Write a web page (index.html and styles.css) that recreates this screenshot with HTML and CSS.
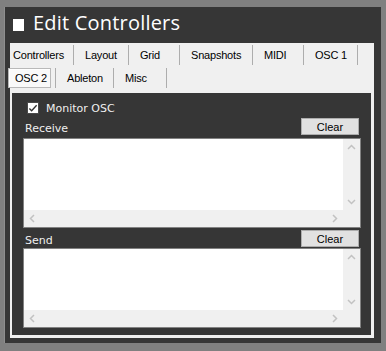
FILE: index.html
```html
<!DOCTYPE html>
<html lang="en">

<head>
  <meta charset="utf-8" />
  <title>Edit Controllers</title>
  <link rel="stylesheet" href="styles.css">
</head>

<body>
  <div class="window">
    <div class="titlebar">
      <span class="title-icon"></span>
      <h1>Edit Controllers</h1>
    </div>

    <div class="tabcontrol">
      <div class="tabstrip">
        <div class="tabrow row-top">
          <div class="tab">Controllers</div>
          <div class="tab">Layout</div>
          <div class="tab">Grid</div>
          <div class="tab">Snapshots</div>
          <div class="tab">MIDI</div>
          <div class="tab">OSC 1</div>
        </div>
        <div class="tabrow row-bottom">
          <div class="tab selected"><span>OSC 2</span></div>
          <div class="tab">Ableton</div>
          <div class="tab">Misc</div>
        </div>
      </div>

      <div class="tabpage">
        <label class="check">
          <span class="checkbox">
            <svg width="11" height="11" viewBox="0 0 11 11">
              <polyline points="1.5,5.5 4,8 9.5,2" fill="none" stroke="#333" stroke-width="1.5" />
            </svg>
          </span>
          Monitor OSC
        </label>

        <div class="log-head head-receive">
          <span>Receive</span>
          <button type="button">Clear</button>
        </div>
        <div class="logbox box-receive">
          <div class="log-text"></div>
          <div class="vscroll">
            <svg width="17" height="17" viewBox="0 0 17 17"><polyline points="5,10 8.5,6.5 12,10" /></svg>
            <svg width="17" height="17" viewBox="0 0 17 17"><polyline points="5,7 8.5,10.5 12,7" /></svg>
          </div>
          <div class="hscroll">
            <svg width="17" height="17" viewBox="0 0 17 17"><polyline points="10,5 6.5,8.5 10,12" /></svg>
            <svg width="17" height="17" viewBox="0 0 17 17"><polyline points="7,5 10.5,8.5 7,12" /></svg>
          </div>
          <div class="corner"></div>
        </div>

        <div class="log-head head-send">
          <span>Send</span>
          <button type="button">Clear</button>
        </div>
        <div class="logbox box-send">
          <div class="log-text"></div>
          <div class="vscroll">
            <svg width="17" height="17" viewBox="0 0 17 17"><polyline points="5,10 8.5,6.5 12,10" /></svg>
            <svg width="17" height="17" viewBox="0 0 17 17"><polyline points="5,7 8.5,10.5 12,7" /></svg>
          </div>
          <div class="hscroll">
            <svg width="17" height="17" viewBox="0 0 17 17"><polyline points="10,5 6.5,8.5 10,12" /></svg>
            <svg width="17" height="17" viewBox="0 0 17 17"><polyline points="7,5 10.5,8.5 7,12" /></svg>
          </div>
          <div class="corner"></div>
        </div>
      </div>
    </div>
  </div>
</body>

</html>
```

FILE: styles.css
```css
* {
  box-sizing: border-box;
}

body {
  margin: 0;
  background-color: #808080;
  font-family: "Liberation Sans", Arial, sans-serif;
  font-size: 11px;
  overflow: hidden;
}

.window {
  margin: 7px 0 0 4px;
  width: 377px;
  height: 336px;
  background-color: #363636;
  border-left: 1px solid #8e8e8e;
}

/* title */

.titlebar {
  display: flex;
  align-items: flex-start;
  height: 36px;
  padding: 6px 0 0 8px;
}

.title-icon {
  width: 11px;
  height: 12px;
  margin-top: 6px;
  background-color: #fff;
}

.titlebar h1 {
  margin: 0 0 0 9px;
  font-family: "Open Sans", sans-serif;
  font-weight: normal;
  font-size: 20px;
  line-height: 20px;
  letter-spacing: 0.2px;
  color: #fff;
}

/* tab control */

.tabcontrol {
  margin: 0 7px 0 5px;
  height: 295px;
  background-color: #f0f0f0;
}

.tabstrip {
  padding: 2px 0 5px;
}

.tabrow {
  display: grid;
  height: 20px;
}

.row-top {
  grid-template-columns: 64px 55px 51px 73px 51px 54px;
  margin-bottom: 3px;
}

.row-bottom {
  grid-template-columns: 46px 58px 53px;
}

.tab {
  height: 20px;
  line-height: 20px;
  padding-left: 11px;
  border-right: 1px solid #adadad;
  color: #000;
  letter-spacing: -0.2px;
  white-space: nowrap;
}

.row-top .tab:first-child {
  padding-left: 3px;
}

.tab.selected {
  padding-left: 0;
}

.tab.selected span {
  display: block;
  width: 43px;
  height: 20px;
  margin-left: -2px;
  padding-left: 6px;
  line-height: 18px;
  background-color: #f9f9f9;
  border: 1px solid #b9b9b9;
  box-shadow: inset 1px 1px #fff;
}

.tabpage {
  display: flex;
  flex-direction: column;
  height: 242px;
  margin: 0 3px 0 2px;
  padding-top: 9px;
  background-color: #363636;
  color: #f0f0f0;
  font-family: "DejaVu Sans", Verdana, sans-serif;
}

.check {
  display: flex;
  align-items: flex-start;
  height: 11px;
  margin-left: 15px;
  line-height: 13px;
}

.checkbox {
  display: flex;
  align-items: center;
  justify-content: center;
  width: 12px;
  height: 12px;
  margin-right: 7px;
  background-color: #fff;
  border: 1px solid #4a4a4a;
}

/* logs */

.log-head {
  display: flex;
  align-items: flex-end;
  justify-content: space-between;
  height: 17px;
  padding: 0 12px 0 13px;
  line-height: 13px;
}

.head-receive {
  margin-top: 5px;
  margin-bottom: 3px;
}

.head-send {
  margin-top: 2px;
  margin-bottom: 1px;
}

.log-head button {
  width: 58px;
  height: 17px;
  padding: 0;
  font-family: "Liberation Sans", Arial, sans-serif;
  font-size: 11px;
  color: #000;
  background-color: #e1e1e1;
  border: 1px solid #adadad;
  border-radius: 0;
}

.logbox {
  display: grid;
  grid-template-columns: 1fr 17px;
  grid-template-rows: 1fr 17px;
  margin: 0 10px 0 11px;
  border: 1px solid #828282;
  background-color: #fff;
}

.box-receive {
  height: 90px;
}

.box-send {
  height: 80px;
}

.vscroll,
.hscroll,
.corner {
  background-color: #f0f0f0;
}

.vscroll {
  display: flex;
  flex-direction: column;
  justify-content: space-between;
}

.hscroll {
  display: flex;
  justify-content: space-between;
}

.logbox svg polyline {
  fill: none;
  stroke: #c2c2c2;
  stroke-width: 1.5;
}
```
